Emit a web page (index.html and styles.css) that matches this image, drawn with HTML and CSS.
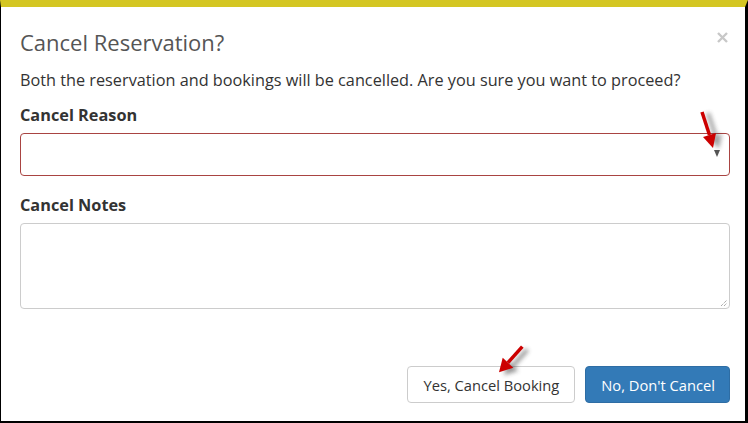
FILE: index.html
```html
<!DOCTYPE html>
<html>
<head>
<meta charset="utf-8">
<link rel="stylesheet" href="styles.css">
</head>
<body>
<div class="frame">
  <div class="header">
    <h4 class="title">Cancel Reservation?</h4>
    <svg class="close" width="11" height="11" viewBox="0 0 11 11"><path d="M1 1 L10 10 M10 1 L1 10" stroke="#c8c8c8" stroke-width="2.4"/></svg>
  </div>
  <div class="body">
    <p class="msg">Both the reservation and bookings will be cancelled. Are you sure you want to proceed?</p>
    <label class="lbl">Cancel Reason</label>
    <div class="select"><span class="caret"></span></div>
    <label class="lbl lbl2">Cancel Notes</label>
    <div class="textarea">
      <svg class="grip" width="8" height="8" viewBox="0 0 8 8"><path d="M1 7 L7 1 M4 7 L7 4" stroke="#888" stroke-width="1" stroke-dasharray="1 1"/></svg>
    </div>
  </div>
  <div class="footer">
    <button class="btn btn-default">Yes, Cancel Booking</button>
    <button class="btn btn-primary">No, Don't Cancel</button>
  </div>
  <svg class="arrow arrow1" width="40" height="55" viewBox="0 0 40 55">
    <defs><filter id="sh" x="-50%" y="-50%" width="200%" height="200%"><feGaussianBlur stdDeviation="2.2"/></filter></defs>
    <g transform="translate(6,1)" filter="url(#sh)" opacity="0.45">
      <line x1="3" y1="8" x2="10.5" y2="31" stroke="#333" stroke-width="4"/>
      <polygon points="4,33 17,29 14,44" fill="#333"/>
    </g>
    <line x1="3" y1="8" x2="10.5" y2="31" stroke="#cc0000" stroke-width="3.5"/>
    <polygon points="4,33 17,29 14,44" fill="#cc0000"/>
  </svg>
  <svg class="arrow arrow2" width="50" height="45" viewBox="0 0 50 45">
    <g transform="translate(5,3)" filter="url(#sh)" opacity="0.5">
      <line x1="26.3" y1="9.7" x2="12" y2="25.7" stroke="#333" stroke-width="4"/>
      <polygon points="6.7,20.7 17.3,30.7 3,35.3" fill="#333"/>
    </g>
    <line x1="26.3" y1="9.7" x2="12" y2="25.7" stroke="#cc0000" stroke-width="3.5"/>
    <polygon points="6.7,20.7 17.3,30.7 3,35.3" fill="#cc0000"/>
  </svg>
</div>
</body>
</html>
```
FILE: styles.css
```css
html, body { margin: 0; padding: 0; background: #fff; }
body { font-family: "Open Sans", "Liberation Sans", sans-serif; color: #333; }
.frame {
  position: relative;
  box-sizing: border-box;
  width: 748px;
  height: 423px;
  border-top: 7px solid #d4c622;
  border-left: 1px solid #000;
  border-right: 3px solid #000;
  border-bottom: 2px solid #000;
  background: #fff;
}
.header { display: flex; justify-content: space-between; align-items: flex-start; padding: 22px 17px 0 19px; }
.title { margin: 0; font-size: 22px; font-weight: 400; color: #555; line-height: 26px; }
.close { margin-top: 3px; }
.body { padding: 0 15px 0 19px; }
.msg { margin: 14px 0 0; font-size: 16.25px; line-height: 22px; color: #333; }
.lbl { display: block; font-weight: 700; font-size: 16.3px; line-height: 22px; margin-top: 13px; color: #333; }
.lbl2 { margin-top: 18px; }
.select {
  position: relative;
  box-sizing: border-box;
  height: 43px;
  margin-top: 7px;
  border: 1px solid #a94442;
  border-radius: 4px;
}
.caret {
  position: absolute; right: 9px; top: 16px;
  width: 0; height: 0;
  border-left: 3.5px solid transparent; border-right: 3.5px solid transparent;
  border-top: 7px solid #555;
}
.textarea {
  position: relative;
  box-sizing: border-box;
  height: 86px;
  margin-top: 7px;
  border: 1px solid #ccc;
  border-radius: 4px;
}
.grip { position: absolute; right: 1px; bottom: 1px; }
.footer { display: flex; justify-content: flex-end; gap: 10px; padding: 57px 15px 0 0; }
.btn {
  font-family: "Open Sans", "Liberation Sans", sans-serif;
  font-size: 14.7px; line-height: 20px;
  height: 37px; box-sizing: border-box;
  border-radius: 4px; padding: 7px 15px;
  cursor: pointer;
}
.btn-default { background: #fff; border: 1px solid #ccc; color: #333; }
.btn-primary { background: #337ab7; border: 1px solid #2e6da4; color: #fff; padding: 7px 14px 7px 15px; }
.arrow { position: absolute; overflow: visible; }
.arrow1 { left: 698px; top: 97px; }
.arrow2 { left: 495px; top: 330px; }
```
